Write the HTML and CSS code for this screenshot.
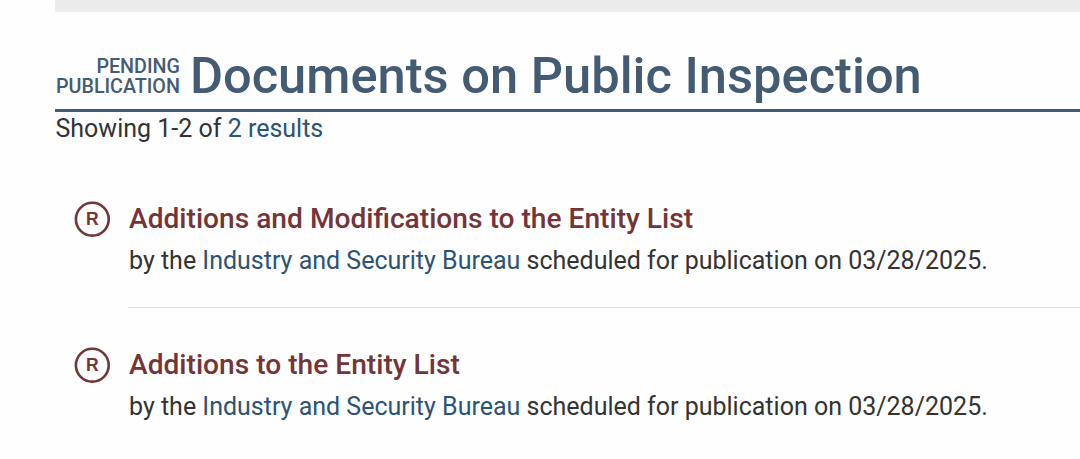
FILE: index.html
```html
<!DOCTYPE html>
<html lang="en">
<head>
    <meta charset="UTF-8" />
    <meta name="viewport" content="width=device-width, initial-scale=1.0" />
    <title>Documents on Public Inspection</title>
    <link rel="stylesheet" href="styles.css">
</head>
<body>
    <div class="top-panel"></div>

    <div class="results">
        <header class="section-header">
            <div class="label">
                <div>Pending</div>
                <div>Publication</div>
            </div>
            <h1>Documents on Public Inspection</h1>
        </header>
        <p class="count">Showing 1-2 of <a href="#">2 results</a></p>

        <ul class="document-list">
            <li class="document">
                <svg class="rule-icon" viewBox="0 0 36 36">
                    <circle cx="18.3" cy="18.2" r="16.4" />
                    <text x="18.4" y="23.9">R</text>
                </svg>
                <div class="document-body">
                    <h2><a href="#">Additions and Modifications to the Entity List</a></h2>
                    <p>by the <a href="#">Industry and Security Bureau</a> scheduled for publication on 03/28/2025.</p>
                </div>
            </li>
            <li class="document">
                <svg class="rule-icon" viewBox="0 0 36 36">
                    <circle cx="18.3" cy="18.2" r="16.4" />
                    <text x="18.4" y="23.9">R</text>
                </svg>
                <div class="document-body">
                    <h2><a href="#">Additions to the Entity List</a></h2>
                    <p>by the <a href="#">Industry and Security Bureau</a> scheduled for publication on 03/28/2025.</p>
                </div>
            </li>
        </ul>
    </div>
</body>
</html>
```

FILE: styles.css
```css
body {
    font-family: Roboto, "Liberation Sans", sans-serif;
    background-color: #fefefe;
    color: #333;
    margin: 0;
}

a {
    color: #2b5374;
    text-decoration: none;
}

.top-panel {
    height: 12px;
    margin-left: 55px;
    background-color: #ebebeb;
}

.results {
    margin-left: 55px;
}

.section-header {
    display: flex;
    align-items: flex-start;
    height: 97px;
    border-bottom: 3px solid #435b73;
    color: #435b73;
}

.label {
    margin: 45px 0 0 1px;
    font-size: 19.7px;
    line-height: 20px;
    font-weight: 500;
    text-align: right;
    text-transform: uppercase;
}

h1 {
    margin: 34px 0 0 10px;
    font-size: 50.65px;
    line-height: 60px;
    font-weight: 500;
    white-space: nowrap;
}

.count {
    margin: 2px 0 0;
    font-size: 25px;
    line-height: 30px;
    text-indent: 0.5px;
}

.document-list {
    list-style: none;
    margin: 54px 0 0;
    padding: 0 0 0 19px;
}

.document {
    display: flex;
    gap: 18px;
    height: 146px;
}

.document:last-child {
    height: 100px;
}

.rule-icon {
    flex: none;
    width: 36px;
    height: 36px;
    margin-top: 3px;
}

.rule-icon circle {
    fill: none;
    stroke: #733537;
    stroke-width: 2.6;
}

.rule-icon text {
    fill: #733537;
    font-family: "Liberation Sans", sans-serif;
    font-size: 17.5px;
    font-weight: bold;
    text-anchor: middle;
}

.document-body {
    flex: 1;
    height: 109px;
    border-bottom: 1px solid #dedede;
    text-indent: 1px;
}

.document:last-child .document-body {
    height: auto;
    border-bottom: none;
}

h2 {
    margin: 0;
    padding-top: 1px;
    font-size: 28.15px;
    line-height: 40px;
    font-weight: 500;
}

h2 a {
    color: #733537;
}

.document-body p {
    margin: 7px 0 0;
    font-size: 25px;
    line-height: 30px;
    white-space: nowrap;
}
```
